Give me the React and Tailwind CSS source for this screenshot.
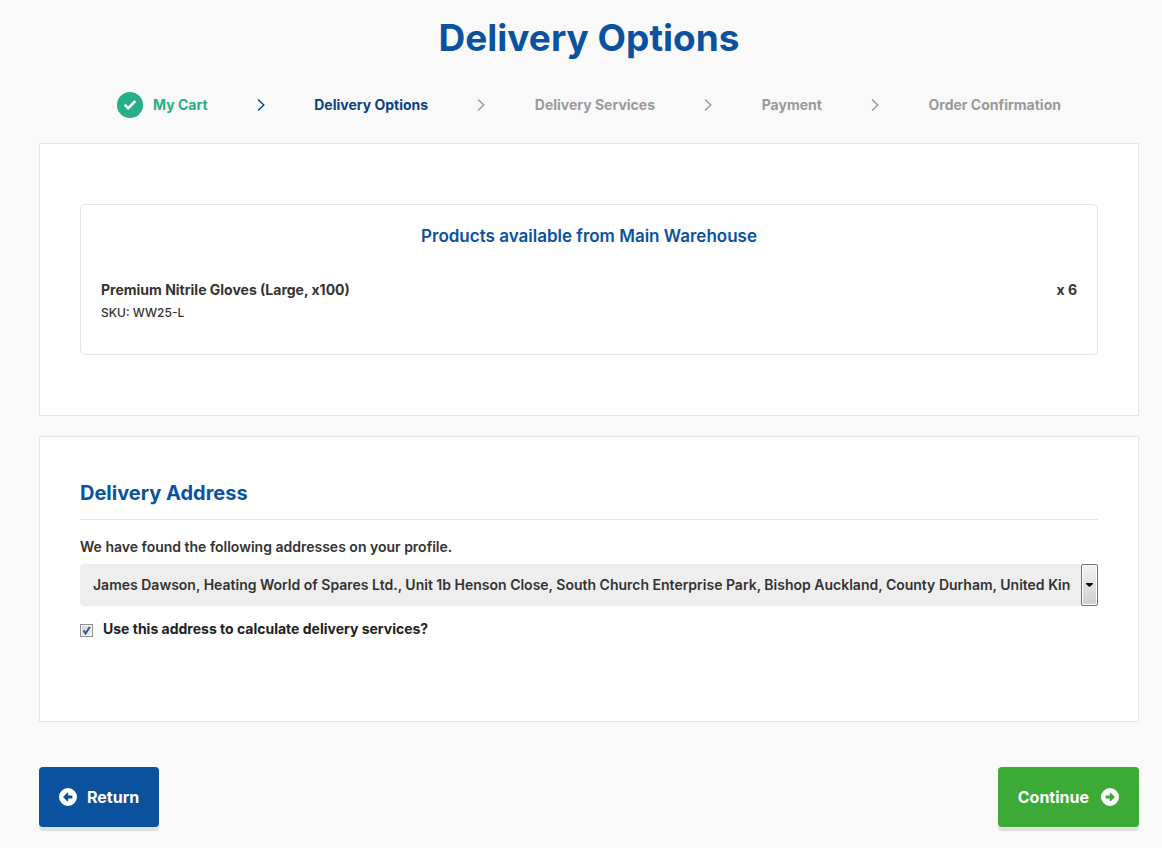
import React, { useState } from 'react';
import clsx from 'clsx';

const steps = [
  { label: 'My Cart', status: 'done' },
  { label: 'Delivery Options', status: 'current' },
  { label: 'Delivery Services', status: 'upcoming' },
  { label: 'Payment', status: 'upcoming' },
  { label: 'Order Confirmation', status: 'upcoming' },
];

const products = [{ name: 'Premium Nitrile Gloves (Large, x100)', sku: 'WW25-L', quantity: 6 }];

const addresses = [
  'James Dawson, Heating World of Spares Ltd., Unit 1b Henson Close, South Church Enterprise Park, Bishop Auckland, County Durham, United Kingdom',
];

const StepChevron = ({ active }) => (
  <svg
    width="8"
    height="12"
    viewBox="0 0 8 12"
    fill="none"
    aria-hidden="true"
    className={clsx('shrink-0', active ? 'text-[#0b4282]' : 'text-[#999999]')}
  >
    <path d="M1 0.5 L6.8 6 L1 11.5" stroke="currentColor" strokeWidth="1.4" />
  </svg>
);

const CircleArrow = ({ direction }) => (
  <svg
    width="18"
    height="18"
    viewBox="0 0 18 18"
    aria-hidden="true"
    className={clsx('shrink-0', direction === 'left' && 'rotate-180')}
  >
    <path
      fill="currentColor"
      fillRule="evenodd"
      d="M9 0a9 9 0 1 1 0 18a9 9 0 0 1 0-18z M4.6 7.6v2.8h4.2v2.8h1L13.9 9L9.8 4.8h-1v2.8z"
    />
  </svg>
);

const Stepper = () => (
  <ol className="mt-8 flex items-center justify-between px-[78px] text-sm leading-5 font-bold">
    {steps.map((step, index) => (
      <React.Fragment key={step.label}>
        {index > 0 && (
          <li aria-hidden="true">
            <StepChevron active={step.status === 'current'} />
          </li>
        )}
        <li
          aria-current={step.status === 'current' ? 'step' : undefined}
          className={clsx(
            'flex h-[26px] items-center gap-[10px]',
            step.status === 'done' && 'text-[#26ae88]',
            step.status === 'current' && 'text-[#0b4282]',
            step.status === 'upcoming' && 'text-[#999999]'
          )}
        >
          {step.status === 'done' && (
            <svg width="26" height="26" viewBox="0 0 26 26" fill="none" aria-hidden="true">
              <circle cx="13" cy="13" r="13" fill="#26ae88" />
              <path d="M7.6 12.8 L11.2 16.2 L18.4 9" stroke="white" strokeWidth="2.6" />
            </svg>
          )}
          {step.label}
        </li>
      </React.Fragment>
    ))}
  </ol>
);

const Products = () => (
  <section className="mt-[25px] border border-[#e5e5e5] bg-white px-10 py-[60px]">
    <div className="rounded-[5px] border border-[#e5e5e5] px-5 pt-5 pb-[29px]">
      <h2 className="text-center text-[17px] leading-[22px] font-semibold text-[#0a529e]">
        Products available from Main Warehouse
      </h2>
      <ul className="mt-8">
        {products.map((product) => (
          <li key={product.sku} className="flex justify-between text-sm leading-[22px] font-bold">
            <div>
              <p>{product.name}</p>
              <p className="text-xs leading-6 font-medium">SKU: {product.sku}</p>
            </div>
            <p>x {product.quantity}</p>
          </li>
        ))}
      </ul>
    </div>
  </section>
);

const DeliveryAddress = () => {
  const [address, setAddress] = useState(addresses[0]);
  const [useForServices, setUseForServices] = useState(true);

  return (
    <section className="mt-5 border border-[#e5e5e5] bg-white px-10 pt-10 pb-[81px]">
      <h2 className="border-b border-[#e5e5e5] pb-[10px] text-xl leading-8 font-bold text-[#0a529e]">
        Delivery Address
      </h2>
      <label htmlFor="address" className="mt-4 block text-sm leading-[22px] font-semibold">
        We have found the following addresses on your profile.
      </label>
      <div className="relative mt-[6px]">
        <select
          id="address"
          value={address}
          onChange={(e) => setAddress(e.target.value)}
          className="block h-[42px] w-full appearance-none rounded bg-[#eeeeee] pr-[27px] pl-[13px] text-sm font-semibold"
        >
          {addresses.map((item) => (
            <option key={item}>{item}</option>
          ))}
        </select>
        {/* Raised drop-down button over the end of the select */}
        <span className="pointer-events-none absolute inset-y-0 right-0 flex w-[17px] items-center justify-center rounded-[2px] border border-[#707070] bg-linear-to-b from-[#f3f3f3] to-[#cfcfcf] inset-ring inset-ring-white">
          <svg width="7" height="4" viewBox="0 0 7 4" aria-hidden="true">
            <path d="M0 0h7v1L3.5 4L0 1z" />
          </svg>
        </span>
      </div>
      <div className="mt-3 flex items-center gap-[10px]">
        <span className="relative mt-[2px] size-[13px]">
          <input
            id="use-address"
            type="checkbox"
            checked={useForServices}
            onChange={(e) => setUseForServices(e.target.checked)}
            className="peer block size-[13px] appearance-none border border-[#8e8f8f] bg-linear-to-br from-[#cdd2da] to-[#f6f6f6] inset-ring inset-ring-[#f4f4f4]"
          />
          <svg
            viewBox="0 0 13 13"
            fill="none"
            aria-hidden="true"
            className="pointer-events-none absolute inset-0 hidden size-[13px] peer-checked:block"
          >
            <path d="M3.4 6.4 L5.6 9.4 L9.8 3" stroke="#3f5596" strokeWidth="2" />
          </svg>
        </span>
        <label htmlFor="use-address" className="text-sm leading-[22px] font-bold text-[#222222]">
          Use this address to calculate delivery services?
        </label>
      </div>
    </section>
  );
};

export default function App() {
  return (
    <div className="min-h-screen bg-[#f9f9f9] font-['Inter',sans-serif] text-[#333333]">
      <main className="pt-4 pr-[23px] pb-[21px] pl-[39px]">
        <h1 className="text-center text-[37px] leading-[44px] font-bold text-[#0a529e]">Delivery Options</h1>
        <Stepper />
        <Products />
        <DeliveryAddress />
        <div className="mt-[45px] flex justify-between text-base font-bold text-white">
          <button
            type="button"
            className="flex h-[60px] items-center gap-[10px] rounded bg-[#0a529e] px-5 shadow-[0_4px_0_#e0e0e0]"
          >
            <CircleArrow direction="left" />
            Return
          </button>
          <button
            type="button"
            className="flex h-[60px] items-center gap-3 rounded bg-[#3caa36] px-5 shadow-[0_4px_0_#e0e0e0]"
          >
            Continue
            <CircleArrow direction="right" />
          </button>
        </div>
      </main>
    </div>
  );
}
